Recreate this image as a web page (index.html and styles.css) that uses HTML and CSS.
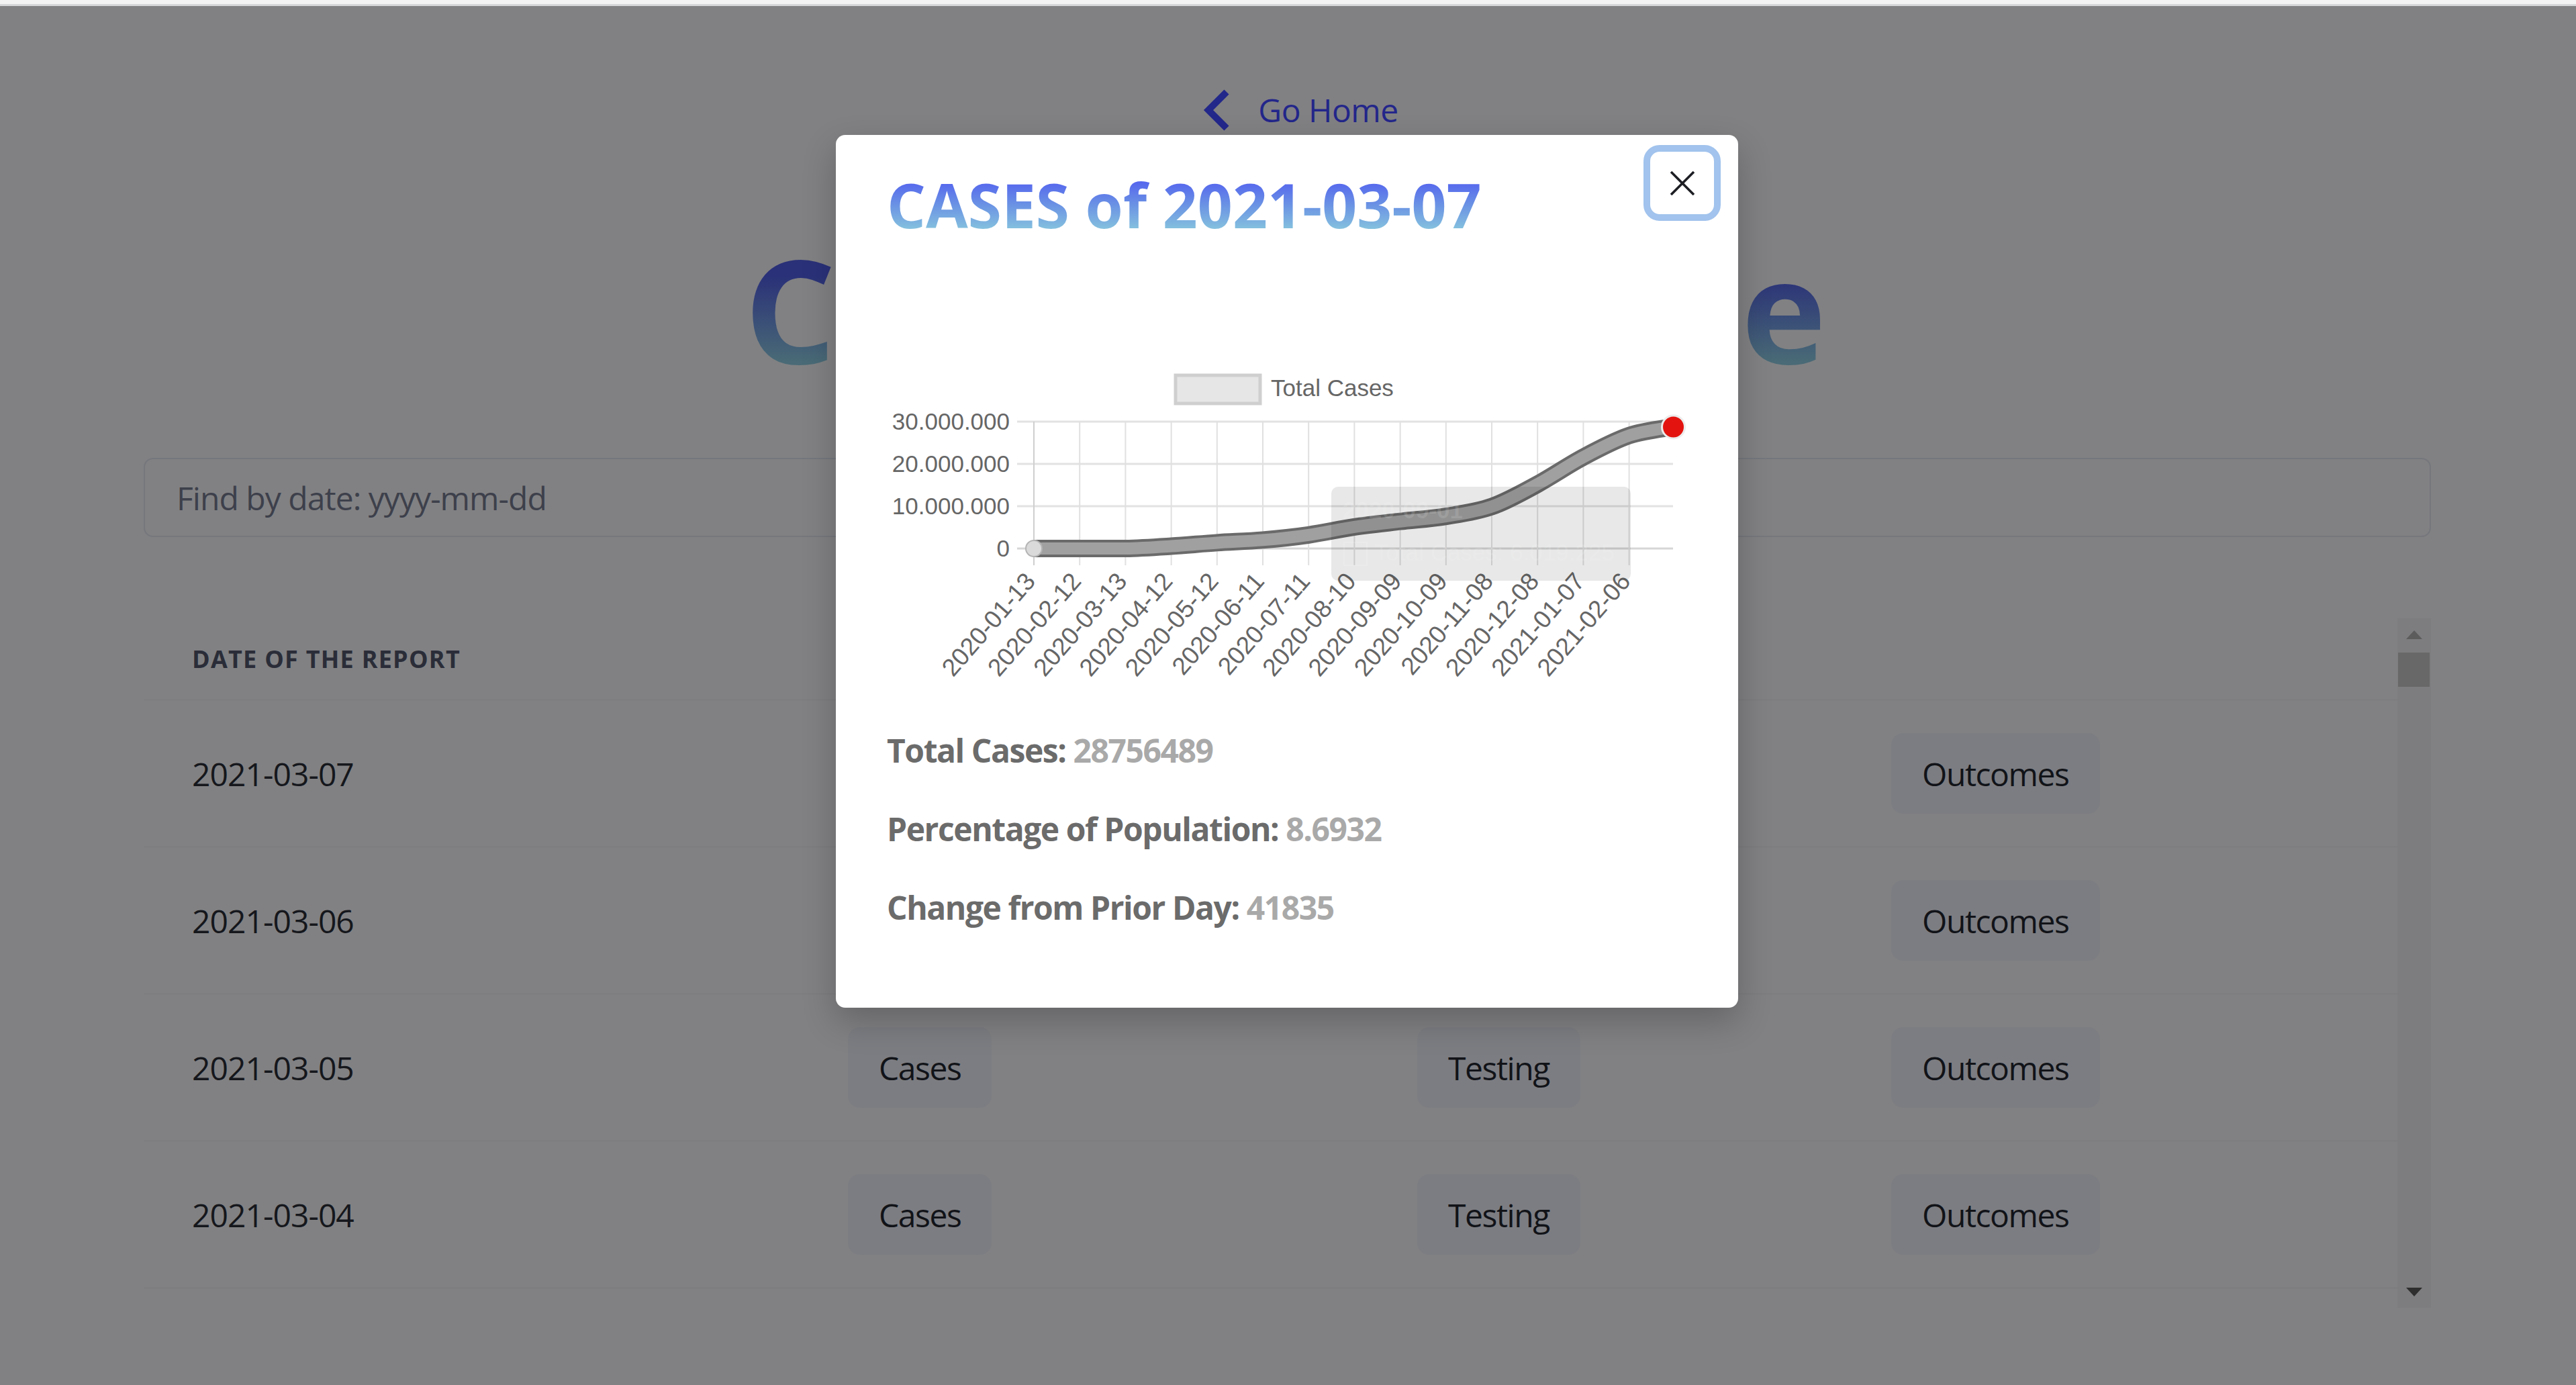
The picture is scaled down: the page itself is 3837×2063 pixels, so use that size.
FILE: index.html
```html
<!DOCTYPE html>
<html lang="en">
<head>
<meta charset="utf-8">
<title>Covid Archive</title>
<link rel="stylesheet" href="styles.css">
</head>
<body>
<div class="top-strip"></div>
<main class="page">
  <nav class="nav">
    <a class="home-link" href="#">
      <svg class="chevron" width="40" height="62" viewBox="0 0 40 62"><polyline points="35,4 8,31 35,58" fill="none" stroke="#22278a" stroke-width="10"/></svg>
      <span>Go Home</span>
    </a>
  </nav>
  <h1 class="hero-title">COVID Archive</h1>
  <input class="search" type="text" placeholder="Find by date: yyyy-mm-dd">
  <section class="table-wrap">
    <div class="table-scroll">
      <table class="reports">
        <colgroup><col class="c1"><col class="c2"><col class="c3"><col></colgroup>
        <thead><tr><th>Date of the report</th><th></th><th></th><th></th></tr></thead>
        <tbody>
          <tr><td>2021-03-07</td><td><button class="btn">Cases</button></td><td><button class="btn">Testing</button></td><td><button class="btn">Outcomes</button></td></tr>
          <tr><td>2021-03-06</td><td><button class="btn">Cases</button></td><td><button class="btn">Testing</button></td><td><button class="btn">Outcomes</button></td></tr>
          <tr><td>2021-03-05</td><td><button class="btn">Cases</button></td><td><button class="btn">Testing</button></td><td><button class="btn">Outcomes</button></td></tr>
          <tr><td>2021-03-04</td><td><button class="btn">Cases</button></td><td><button class="btn">Testing</button></td><td><button class="btn">Outcomes</button></td></tr>
        </tbody>
      </table>
    </div>
    <div class="scrollbar">
      <div class="sb-btn"><span class="arrow-up"></span></div>
      <div class="sb-thumb"></div>
      <div class="sb-space"></div>
      <div class="sb-btn"><span class="arrow-down"></span></div>
    </div>
  </section>
</main>

<div class="modal" role="dialog">
  <button class="close" aria-label="Close">
    <svg width="38" height="36" viewBox="0 0 38 36"><line x1="2" y1="1" x2="36" y2="35" stroke="#1d1e24" stroke-width="3.6"/><line x1="36" y1="1" x2="2" y2="35" stroke="#1d1e24" stroke-width="3.6"/></svg>
  </button>
  <h2 class="modal-title">CASES of 2021-03-07</h2>
  <svg class="chart" width="1192" height="490" viewBox="0 0 1192 490">
    <g class="legend">
      <rect x="430" y="29" width="126" height="42" fill="#e6e6e6" stroke="#cfcfcf" stroke-width="5"/>
      <text x="572" y="60">Total Cases</text>
    </g>
    <g stroke="#e2e2e2" stroke-width="3">
      <line x1="194" y1="98" x2="1171" y2="98"/>
      <line x1="194" y1="161" x2="1171" y2="161"/>
      <line x1="194" y1="224" x2="1171" y2="224"/>
      <line x1="194" y1="287" x2="1171" y2="287" stroke="#d6d6d6"/>
    </g>
    <g stroke="#e0e0e0" stroke-width="2">
      <line x1="219" y1="98" x2="219" y2="312" stroke="#cfcfcf"/>
      <line x1="287.2" y1="98" x2="287.2" y2="312"/>
      <line x1="355.4" y1="98" x2="355.4" y2="312"/>
      <line x1="423.6" y1="98" x2="423.6" y2="312"/>
      <line x1="491.8" y1="98" x2="491.8" y2="312"/>
      <line x1="560" y1="98" x2="560" y2="312"/>
      <line x1="628.2" y1="98" x2="628.2" y2="312"/>
      <line x1="696.4" y1="98" x2="696.4" y2="312"/>
      <line x1="764.6" y1="98" x2="764.6" y2="312"/>
      <line x1="832.8" y1="98" x2="832.8" y2="312"/>
      <line x1="901" y1="98" x2="901" y2="312"/>
      <line x1="969.2" y1="98" x2="969.2" y2="312"/>
      <line x1="1037.4" y1="98" x2="1037.4" y2="312"/>
      <line x1="1105.6" y1="98" x2="1105.6" y2="312"/>
    </g>
    <g class="ylabels" text-anchor="end">
      <text x="183" y="110">30.000.000</text>
      <text x="183" y="173">20.000.000</text>
      <text x="183" y="236">10.000.000</text>
      <text x="183" y="299">0</text>
    </g>
    <g class="xlabels" text-anchor="end">
      <text transform="translate(223 337) rotate(-49)">2020-01-13</text>
      <text transform="translate(291.2 337) rotate(-49)">2020-02-12</text>
      <text transform="translate(359.4 337) rotate(-49)">2020-03-13</text>
      <text transform="translate(427.6 337) rotate(-49)">2020-04-12</text>
      <text transform="translate(495.8 337) rotate(-49)">2020-05-12</text>
      <text transform="translate(564 337) rotate(-49)">2020-06-11</text>
      <text transform="translate(632.2 337) rotate(-49)">2020-07-11</text>
      <text transform="translate(700.4 337) rotate(-49)">2020-08-10</text>
      <text transform="translate(768.6 337) rotate(-49)">2020-09-09</text>
      <text transform="translate(836.8 337) rotate(-49)">2020-10-09</text>
      <text transform="translate(905 337) rotate(-49)">2020-11-08</text>
      <text transform="translate(973.2 337) rotate(-49)">2020-12-08</text>
      <text transform="translate(1041.4 337) rotate(-49)">2021-01-07</text>
      <text transform="translate(1109.6 337) rotate(-49)">2021-02-06</text>
    </g>
    <path d="M219 287 C230.4 287 264.5 287 287.2 287 C309.9 287 332.7 287 355.4 287 C378.1 286.4 400.9 284.9 423.6 283.5 C446.3 282.1 469.1 279.9 491.8 278.4 C514.5 276.9 537.3 276.3 560 274.4 C582.7 272.5 605.5 270.1 628.2 266.8 C650.9 263.6 673.7 258.3 696.4 254.9 C719.1 251.6 741.9 249.3 764.6 246.7 C787.3 244.1 810.1 242.8 832.8 239.1 C855.5 235.4 878.3 232.6 901 224.6 C923.7 216.6 946.5 203.5 969.2 191.2 C991.9 178.9 1014.7 163 1037.4 150.9 C1060.1 138.8 1083.3 126.3 1105.6 118.8 C1128 111.3 1160.5 108 1171.5 105.8" fill="none" stroke="#6a6a6a" stroke-width="26"/>
    <path d="M219 287 C230.4 287 264.5 287 287.2 287 C309.9 287 332.7 287 355.4 287 C378.1 286.4 400.9 284.9 423.6 283.5 C446.3 282.1 469.1 279.9 491.8 278.4 C514.5 276.9 537.3 276.3 560 274.4 C582.7 272.5 605.5 270.1 628.2 266.8 C650.9 263.6 673.7 258.3 696.4 254.9 C719.1 251.6 741.9 249.3 764.6 246.7 C787.3 244.1 810.1 242.8 832.8 239.1 C855.5 235.4 878.3 232.6 901 224.6 C923.7 216.6 946.5 203.5 969.2 191.2 C991.9 178.9 1014.7 163 1037.4 150.9 C1060.1 138.8 1083.3 126.3 1105.6 118.8 C1128 111.3 1160.5 108 1171.5 105.8" fill="none" stroke="#a0a0a0" stroke-width="18"/>
    <circle cx="219" cy="287" r="12" fill="#dadada" stroke="#b4b4b4" stroke-width="2"/>
    <g class="tooltip">
      <rect x="662" y="195" width="446" height="140" rx="10" fill="rgba(0,0,0,0.09)"/>
      <text x="679" y="242" fill="rgba(255,255,255,0.12)" font-weight="bold">2020-09-01</text>
      <rect x="681" y="278" width="34" height="34" fill="none" stroke="rgba(255,255,255,0.14)" stroke-width="2"/>
      <text x="726" y="305" fill="rgba(255,255,255,0.14)">Total Cases: 6.019.225</text>
    </g>
    <circle cx="1171.5" cy="106" r="17" fill="#e3140f" stroke="#ececec" stroke-width="3"/>
  </svg>
  <div class="stats">
    <p>Total Cases: <span>28756489</span></p>
    <p>Percentage of Population: <span>8.6932</span></p>
    <p>Change from Prior Day: <span>41835</span></p>
  </div>
</div>
</body>
</html>
```
FILE: styles.css
```css
html, body {
  margin: 0;
  padding: 0;
  width: 3837px;
  height: 2063px;
  overflow: hidden;
}
body {
  background: #818183;
  font-family: "Open Sans", "Noto Sans", sans-serif;
  color: #15171c;
  position: relative;
}
.top-strip {
  height: 6px;
  background: #f3f3f3;
  border-bottom: 3px solid #d6d7d8;
}
.page {
  padding: 0 216px 0 214px;
}
.nav {
  display: flex;
  justify-content: center;
  margin-top: 125px;
}
.home-link {
  display: flex;
  align-items: center;
  gap: 42px;
  margin-left: 40px;
  height: 60px;
  font-size: 48px;
  line-height: 60px;
  color: #23268a;
  text-decoration: none;
  letter-spacing: -0.01em;
}
.chevron { display: block; }
.hero-title {
  margin: 170px 0 0;
  text-align: center;
  font-size: 214px;
  line-height: 190px;
  font-weight: 700;
  letter-spacing: 6px;
  background: linear-gradient(180deg, #2a3178 25%, #496a76 92%);
  -webkit-background-clip: text;
  background-clip: text;
  color: transparent;
}
.search {
  display: block;
  box-sizing: border-box;
  width: 100%;
  height: 118px;
  margin-top: 128px;
  padding: 0 0 0 47px;
  border: 2px solid #75777d;
  border-radius: 14px;
  background: transparent;
  font-family: "Open Sans", "Noto Sans", sans-serif;
  font-size: 48px;
  letter-spacing: -0.02em;
  color: #3d404b;
  outline: none;
}
.search::placeholder { color: #3d404b; }
.table-wrap {
  display: flex;
  margin-top: 121px;
  height: 1027px;
  overflow: hidden;
}
.table-scroll {
  flex: 1;
  overflow: hidden;
}
.reports {
  width: 100%;
  table-layout: fixed;
  border-collapse: collapse;
}
.reports .c1 { width: 977px; }
.reports .c2 { width: 848px; }
.reports .c3 { width: 706px; }
.reports tr { border-bottom: 1px solid #7a7a7d; }
.reports th {
  height: 121px;
  padding: 0 0 0 72px;
  text-align: left;
  vertical-align: middle;
  font-size: 36px;
  font-weight: 700;
  text-transform: uppercase;
  letter-spacing: 0.035em;
  color: #2a2d38;
}
.reports td {
  height: 218px;
  padding: 0 0 0 72px;
  vertical-align: middle;
  font-size: 48px;
  letter-spacing: -0.02em;
  color: #15171c;
}
.btn {
  height: 120px;
  padding: 0 46px;
  border: none;
  border-radius: 18px;
  background: #7c7d82;
  font-family: "Open Sans", "Noto Sans", sans-serif;
  font-size: 48px;
  letter-spacing: -0.03em;
  color: #111318;
}
.scrollbar {
  width: 50px;
  display: flex;
  flex-direction: column;
  background: #7d7d7f;
}
.sb-btn {
  height: 48px;
  display: flex;
  align-items: center;
  justify-content: center;
}
.arrow-up {
  width: 0;
  height: 0;
  border-left: 12px solid transparent;
  border-right: 12px solid transparent;
  border-bottom: 13px solid #5c5c5c;
}
.arrow-down {
  width: 0;
  height: 0;
  border-left: 12px solid transparent;
  border-right: 12px solid transparent;
  border-top: 13px solid #2e2e2e;
}
.sb-thumb {
  height: 51px;
  margin: 3px 2px 0 1px;
  background: #686868;
}
.sb-space { flex: 1; }

.modal {
  position: absolute;
  top: 201px;
  left: 1245px;
  width: 1344px;
  box-sizing: border-box;
  padding: 59px 76px 119px;
  background: #fff;
  border-radius: 14px;
  box-shadow: 0 20px 50px rgba(0, 0, 0, 0.22);
}
.close {
  position: absolute;
  top: 15px;
  right: 26px;
  width: 115px;
  height: 113px;
  box-sizing: border-box;
  padding: 0;
  border: 10px solid #a1c3ed;
  border-radius: 24px;
  background: #fff;
  display: flex;
  align-items: center;
  justify-content: center;
}
.close svg { display: block; }
.modal-title {
  margin: 0;
  font-size: 91px;
  line-height: 90px;
  font-weight: 700;
  background: linear-gradient(180deg, #5566ee 12%, #6a92e4 50%, #86c3de 92%);
  -webkit-background-clip: text;
  background-clip: text;
  color: transparent;
  width: max-content;
}
.chart {
  display: block;
  margin-top: 180px;
  font-family: "Liberation Sans", Arial, sans-serif;
  font-size: 35px;
  fill: #666;
}
.chart .xlabels { font-size: 37px; }
.stats {
  margin-top: 68px;
  display: flex;
  flex-direction: column;
  gap: 57px;
}
.stats p {
  margin: 0;
  font-size: 48px;
  line-height: 60px;
  font-weight: 700;
  letter-spacing: -0.03em;
  color: #6b6b6b;
}
.stats span { color: #a9a9a9; }
```
